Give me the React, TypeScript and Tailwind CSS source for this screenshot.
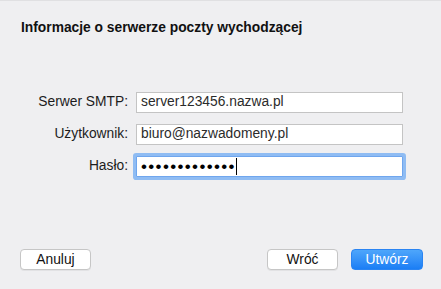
import React from "react";

const Field = ({ label, value }: { label: string; value: string }) => (
  <div className="flex items-center">
    <label className="w-[128px] text-right text-[13.8px] text-[#1c1c1c]">{label}</label>
    <div className="ml-[8px] flex h-[21px] w-[267px] items-center border border-[#c4c4c4] bg-white px-[4px] text-[13.8px] text-[#2b2b2b]">
      {value}
    </div>
  </div>
);

export default function App() {
  return (
    <div
      className="flex h-[289px] w-[441px] flex-col border-t border-[#e0e0e2] bg-[#efeff1]"
      style={{ fontFamily: '"Liberation Sans", Arial, sans-serif' }}
    >
      <h1 className="px-[21px] pt-[19px] text-[13.8px] leading-[16px] font-bold text-[#111]">
        Informacje o serwerze poczty wychodzącej
      </h1>

      <div className="mt-[56px] flex flex-col gap-[11px]">
        <Field label="Serwer SMTP:" value="server123456.nazwa.pl" />
        <Field label="Użytkownik:" value="biuro@nazwadomeny.pl" />
        <div className="flex items-center">
          <label className="w-[128px] text-right text-[13.8px] text-[#1c1c1c]">Hasło:</label>
          <div className="ml-[8px] flex h-[21px] w-[267px] items-center rounded-[1px] border border-[#6fa6ee] bg-white pl-[4px] shadow-[0_0_0_3px_#8fbcf3]">
            <span className="text-[17px] leading-none tracking-[1.35px] text-black">•••••••••••••</span>
            <span className="h-[17px] w-px bg-black" />
          </div>
        </div>
      </div>

      <div className="mt-auto flex items-center pr-[18px] pl-[20px] pb-[19px]">
        <button className="h-[21px] w-[71px] rounded-[4px] border border-[#c6c6c6] bg-white text-[13.8px] text-[#111] shadow-[0_1px_0_rgba(0,0,0,0.05)]">
          Anuluj
        </button>
        <div className="flex-1" />
        <button className="h-[21px] w-[71px] rounded-[4px] border border-[#c6c6c6] bg-white text-[13.8px] text-[#111] shadow-[0_1px_0_rgba(0,0,0,0.05)]">
          Wróć
        </button>
        <button className="ml-[13px] h-[21px] w-[72px] rounded-[4px] border border-[#2a84f2] bg-gradient-to-b from-[#4ea6fb] to-[#1a7ef5] text-[13.8px] text-white">
          Utwórz
        </button>
      </div>
    </div>
  );
}
